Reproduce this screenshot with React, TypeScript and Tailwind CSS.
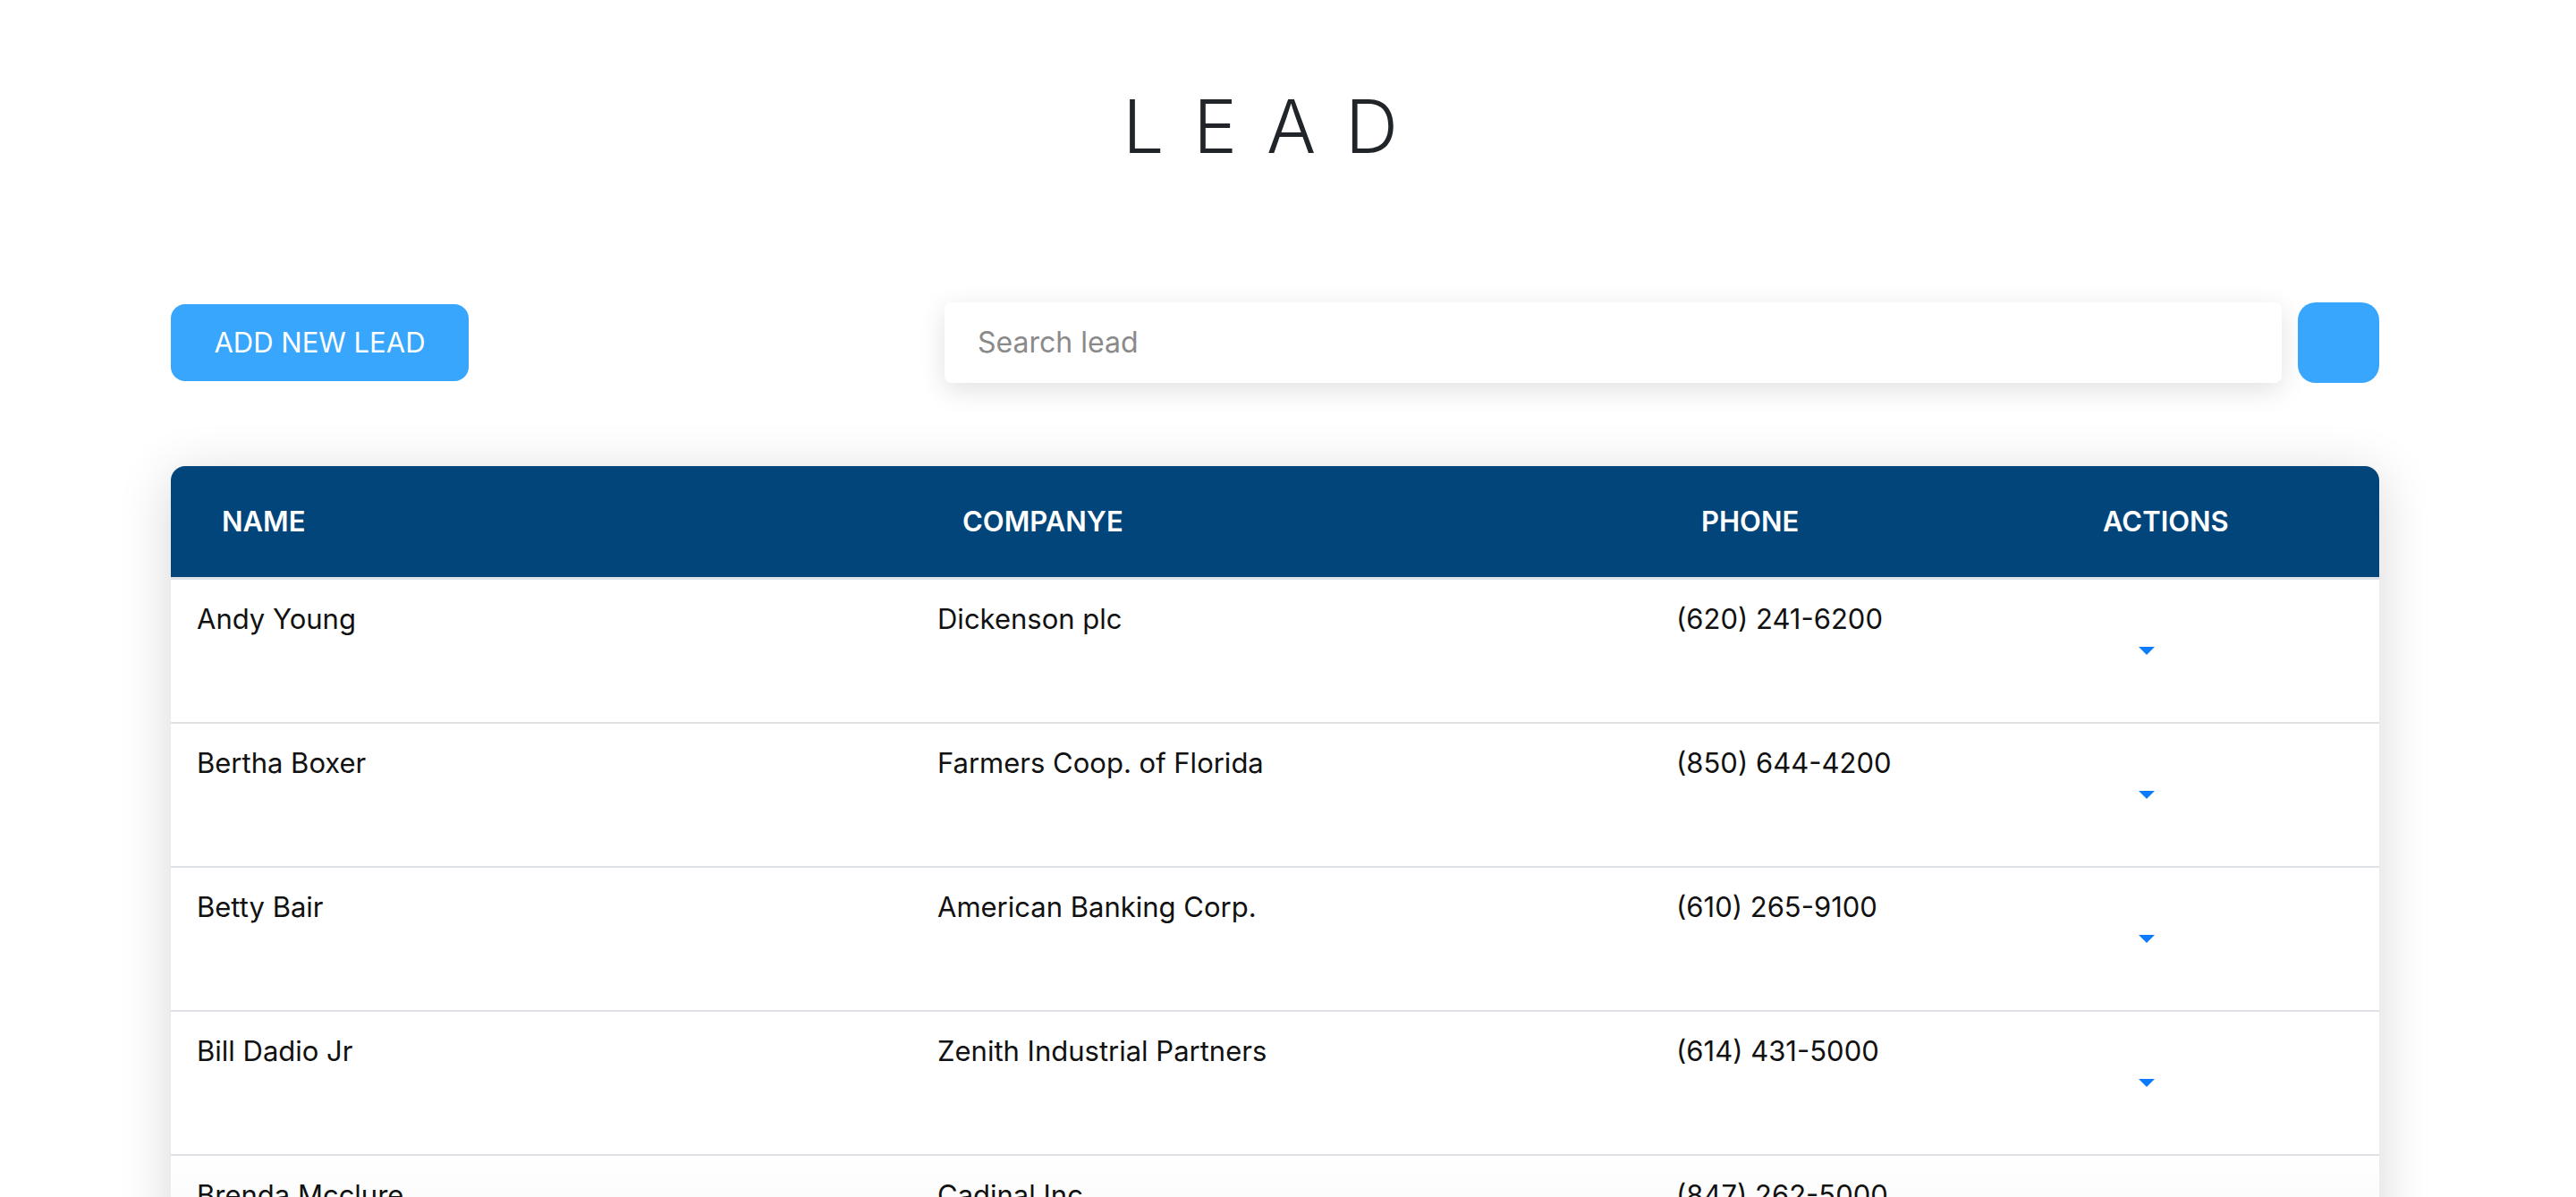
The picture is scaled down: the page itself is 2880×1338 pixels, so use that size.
import React from "react";

const rows = [
  { name: "Andy Young", company: "Dickenson plc", phone: "(620) 241-6200" },
  { name: "Bertha Boxer", company: "Farmers Coop. of Florida", phone: "(850) 644-4200" },
  { name: "Betty Bair", company: "American Banking Corp.", phone: "(610) 265-9100" },
  { name: "Bill Dadio Jr", company: "Zenith Industrial Partners", phone: "(614) 431-5000" },
  { name: "Brenda Mcclure", company: "Cadinal Inc.", phone: "(847) 262-5000" },
];

export default function App() {
  return (
    <div
      className="h-[1338px] overflow-hidden bg-white text-[#111]"
      style={{ fontFamily: "Inter, 'Noto Sans', sans-serif" }}
    >
      <div className="ml-[191px] w-[2469px]">
        <h1 className="pt-[101px] text-center text-[82px] font-light leading-none tracking-[0.4em] text-[#212529]">
          LEAD
        </h1>

        <div className="mt-[155px] flex h-[90px] items-center justify-between">
          <button className="h-[86px] w-[333px] rounded-[16px] bg-[#38a6fc] text-[31px] text-white">
            ADD NEW LEAD
          </button>
          <div className="flex items-center gap-[18px]">
            <input
              placeholder="Search lead"
              className="h-[90px] w-[1495px] rounded-[8px] bg-white pb-[2px] pl-[37px] text-[32px] shadow-[0_8px_30px_rgba(0,0,0,0.12)] outline-none placeholder:text-[#8a8a8a]"
            />
            <button className="h-[90px] w-[91px] rounded-[20px] bg-[#38a6fc]" />
          </div>
        </div>

        <div className="mt-[93px] overflow-hidden rounded-t-[16px] bg-white shadow-[0_10px_60px_rgba(0,0,0,0.16)]">
          <div className="grid h-[127px] grid-cols-[828px_826px_449px_1fr] items-center border-b-[3px] border-[#dee2e6] bg-[#02457a] text-[31px] font-semibold text-white">
            <div className="pl-[57px]">NAME</div>
            <div className="pl-[57px]">COMPANYE</div>
            <div className="pl-[57px]">PHONE</div>
            <div className="pl-[57px]">ACTIONS</div>
          </div>
          {rows.map((r, i) => (
            <div
              key={r.name}
              className={`grid h-[161px] grid-cols-[828px_826px_449px_1fr] border-b-2 border-[#dee2e6] text-[31px] leading-[48px] ${
                i === 4 ? "bg-gradient-to-b from-white to-[#f4f4f4]" : ""
              }`}
            >
              <div className="pl-[29px] pt-[20px]">{r.name}</div>
              <div className="pl-[29px] pt-[20px]">{r.company}</div>
              <div className="pl-[29px] pt-[20px]">{r.phone}</div>
              <div className="flex items-center pl-[97px]">
                <span className="h-0 w-0 border-x-[9.5px] border-t-[9px] border-x-transparent border-t-[#0d7bfe]" />
              </div>
            </div>
          ))}
        </div>
      </div>
    </div>
  );
}
